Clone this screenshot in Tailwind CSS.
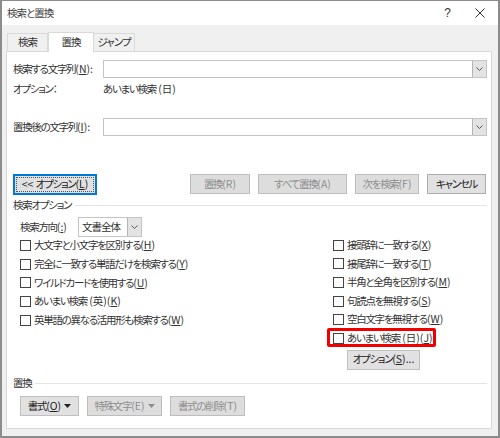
<!DOCTYPE html>
<html lang="ja">
<head>
    <meta charset="UTF-8">
    <title>検索と置換</title>
    <script src="https://cdn.jsdelivr.net/npm/@tailwindcss/browser@4"></script>
</head>
<body class="bg-white">
    <div class="w-[500px] h-[438px] flex flex-col bg-[#f0f0f0] border border-[#8c8c8c] border-l-2 border-r-2 border-b-2 text-[10.5px] tracking-[-1.3px] leading-none whitespace-nowrap text-[#333] [font-feature-settings:'palt'] font-['Noto_Sans_CJK_JP','Liberation_Sans',sans-serif]">
        <!-- title bar -->
        <div class="h-[24px] bg-white flex items-center justify-between pl-[5px] pr-[13px] shrink-0">
            <span class="text-[#444] tracking-[-1px]">検索と置換</span>
            <div class="flex items-center gap-[24px]">
                <span class="text-[#333] font-['Liberation_Sans',sans-serif] text-[12px] tracking-normal">?</span>
                <svg width="10" height="10" viewBox="0 0 10 10" class="stroke-[#333]"><path d="M0.5 0.5 L9.5 9.5 M9.5 0.5 L0.5 9.5" fill="none"/></svg>
            </div>
        </div>

        <!-- tabs -->
        <div class="h-[26px] flex items-end pl-[5px] shrink-0 tracking-[-1px]">
            <div class="w-[41px] h-[18px] bg-[#f0f0f0] border border-b-0 border-[#d9d9d9] flex items-center justify-center">検索</div>
            <div class="w-[46px] h-[20px] bg-white border border-b-0 border-[#d9d9d9] flex items-center justify-center -mb-px relative z-10">置換</div>
            <div class="w-[41px] h-[18px] bg-[#f0f0f0] border border-b-0 border-l-0 border-[#d9d9d9] flex items-center justify-center">ジャンプ</div>
        </div>

        <!-- panel -->
        <div class="w-[486px] h-[378px] ml-[4px] bg-white border border-[#d9d9d9] pl-[6px] pr-[4px] pt-[8px] flex flex-col">
            <div class="flex items-center h-[18px]">
                <span class="w-[90px]">検索する文字列<span class="tracking-normal">(<u>N</u>):</span></span>
                <div class="flex-1 h-[18px] border border-[#c4c4c4] flex justify-end">
                    <div class="w-[14px] h-full bg-[#e3e3e3] border-l border-[#b5b5b5] flex items-center justify-center">
                        <svg width="7" height="4" viewBox="0 0 7 4"><path d="M0.5 0.5 L3.5 3.5 L6.5 0.5" fill="none" stroke="#555"/></svg>
                    </div>
                </div>
            </div>
            <div class="flex items-center h-[20px] mt-[1px]">
                <span class="w-[90px]">オプション：</span>
                <span>あいまい検索<span class="tracking-normal"> (日)</span></span>
            </div>
            <div class="flex items-center h-[18px] mt-[19px]">
                <span class="w-[90px]">置換後の文字列<span class="tracking-normal">(<u>I</u>):</span></span>
                <div class="flex-1 h-[18px] border border-[#c4c4c4] flex justify-end">
                    <div class="w-[14px] h-full bg-[#e3e3e3] border-l border-[#b5b5b5] flex items-center justify-center">
                        <svg width="7" height="4" viewBox="0 0 7 4"><path d="M0.5 0.5 L3.5 3.5 L6.5 0.5" fill="none" stroke="#555"/></svg>
                    </div>
                </div>
            </div>

            <!-- main buttons -->
            <div class="flex items-center h-[20px] mt-[38px]">
                <div class="w-[84px] h-[21px] bg-[#e1e1e1] border-2 border-[#0078d7] flex items-center justify-center text-[#222]">
                    <span class="border border-dotted border-[#555] w-[78px] h-[15px] flex items-center justify-center"><span><span class="tracking-normal">&lt;&lt; </span>オプション<span class="tracking-normal">(<u>L</u>)</span></span></span>
                </div>
                <div class="w-[60px] h-[20px] ml-[93px] bg-[#cfcfcf]/70 border border-[#bdbdbd] text-[#8d8d8d] flex items-center justify-center"><span>置換<span class="tracking-normal">(R)</span></span></div>
                <div class="w-[89px] h-[20px] ml-[8px] bg-[#cfcfcf]/70 border border-[#bdbdbd] text-[#8d8d8d] flex items-center justify-center"><span>すべて置換<span class="tracking-normal">(A)</span></span></div>
                <div class="w-[64px] h-[20px] ml-[8px] bg-[#cfcfcf]/70 border border-[#bdbdbd] text-[#8d8d8d] flex items-center justify-center"><span>次を検索<span class="tracking-normal">(F)</span></span></div>
                <div class="w-[59px] h-[20px] ml-[8px] bg-[#e1e1e1] border border-[#adadad] text-[#222] flex items-center justify-center">キャンセル</div>
            </div>

            <!-- search options -->
            <div class="flex items-center gap-[4px] h-[12px] mt-[5px]">
                <span>検索オプション</span>
                <div class="flex-1 h-px bg-[#e3e3e3]"></div>
            </div>
            <div class="flex items-center pl-[7px] mt-[6px] h-[20px]">
                <span class="w-[58px]">検索方向<span class="tracking-normal">(<u>:</u>)</span></span>
                <div class="w-[64px] h-[20px] border border-[#c4c4c4] flex items-center justify-between pl-[3px]">
                    <span class="tracking-[-1px]">文書全体</span>
                    <div class="w-[14px] h-full bg-[#e3e3e3] border-l border-[#b5b5b5] flex items-center justify-center">
                        <svg width="7" height="4" viewBox="0 0 7 4"><path d="M0.5 0.5 L3.5 3.5 L6.5 0.5" fill="none" stroke="#555"/></svg>
                    </div>
                </div>
            </div>

            <div class="flex -mt-px h-[139px]">
                <div class="w-[320px] pl-[7px] flex flex-col">
                    <label class="h-[18.75px] flex items-center gap-[3px]"><span class="w-[11px] h-[11px] border border-[#444] bg-white"></span><span>大文字と小文字を区別する<span class="tracking-normal">(<u>H</u>)</span></span></label>
                    <label class="h-[18.75px] flex items-center gap-[3px]"><span class="w-[11px] h-[11px] border border-[#444] bg-white"></span><span>完全に一致する単語だけを検索する<span class="tracking-normal">(<u>Y</u>)</span></span></label>
                    <label class="h-[18.75px] flex items-center gap-[3px]"><span class="w-[11px] h-[11px] border border-[#444] bg-white"></span><span>ワイルドカードを使用する<span class="tracking-normal">(<u>U</u>)</span></span></label>
                    <label class="h-[18.75px] flex items-center gap-[3px]"><span class="w-[11px] h-[11px] border border-[#444] bg-white"></span><span>あいまい検索<span class="tracking-normal"> (英)(<u>K</u>)</span></span></label>
                    <label class="h-[18.75px] flex items-center gap-[3px]"><span class="w-[11px] h-[11px] border border-[#444] bg-white"></span><span>英単語の異なる活用形も検索する<span class="tracking-normal">(<u>W</u>)</span></span></label>
                </div>
                <div class="flex flex-col">
                    <label class="h-[18.6px] flex items-center gap-[3px]"><span class="w-[11px] h-[11px] border border-[#444] bg-white"></span><span>接頭辞に一致する<span class="tracking-normal">(<u>X</u>)</span></span></label>
                    <label class="h-[18.6px] flex items-center gap-[3px]"><span class="w-[11px] h-[11px] border border-[#444] bg-white"></span><span>接尾辞に一致する<span class="tracking-normal">(<u>T</u>)</span></span></label>
                    <label class="h-[18.6px] flex items-center gap-[3px]"><span class="w-[11px] h-[11px] border border-[#444] bg-white"></span><span>半角と全角を区別する<span class="tracking-normal">(<u>M</u>)</span></span></label>
                    <label class="h-[18.6px] flex items-center gap-[3px]"><span class="w-[11px] h-[11px] border border-[#444] bg-white"></span><span>句読点を無視する<span class="tracking-normal">(<u>S</u>)</span></span></label>
                    <label class="h-[18.6px] flex items-center gap-[3px]"><span class="w-[11px] h-[11px] border border-[#444] bg-white"></span><span>空白文字を無視する<span class="tracking-normal">(<u>W</u>)</span></span></label>
                    <label class="relative h-[18.6px] flex items-center gap-[3px]"><span class="w-[11px] h-[11px] border border-[#444] bg-white"></span><span>あいまい検索<span class="tracking-normal"> (日)(<u>J</u>)</span></span>
                        <span class="absolute -left-[6px] -top-[1px] w-[109px] h-[19px] border-[3px] border-[#f00000] rounded-[2px]"></span>
                    </label>
                    <div class="w-[73px] h-[20px] ml-[14px] mt-[2px] bg-[#e1e1e1] border border-[#c0c0c0] text-[#222] flex items-center justify-center"><span>オプション<span class="tracking-normal">(<u>S</u>)...</span></span></div>
                </div>
            </div>

            <!-- replace -->
            <div class="flex items-center gap-[4px] h-[12px] mt-[2px]">
                <span>置換</span>
                <div class="flex-1 h-px bg-[#e3e3e3]"></div>
            </div>
            <div class="flex items-center pl-[7px] mt-[7px] h-[20px]">
                <div class="w-[59px] h-[20px] bg-[#e1e1e1] border border-[#c0c0c0] text-[#222] flex items-center justify-center gap-[3px]">
                    <span>書式<span class="tracking-normal">(<u>O</u>)</span></span>
                    <svg width="7" height="4" viewBox="0 0 7 4"><path d="M0 0 L7 0 L3.5 4 Z" fill="#222"/></svg>
                </div>
                <div class="w-[75px] h-[20px] ml-[8px] bg-[#cfcfcf]/70 border border-[#bdbdbd] text-[#8d8d8d] flex items-center justify-center gap-[3px]">
                    <span>特殊文字<span class="tracking-normal">(E)</span></span>
                    <svg width="7" height="4" viewBox="0 0 7 4"><path d="M0 0 L7 0 L3.5 4 Z" fill="#8d8d8d"/></svg>
                </div>
                <div class="w-[75px] h-[20px] ml-[8px] bg-[#cfcfcf]/70 border border-[#bdbdbd] text-[#8d8d8d] flex items-center justify-center"><span>書式の削除<span class="tracking-normal">(T)</span></span></div>
            </div>
        </div>
    </div>
</body>
</html>
